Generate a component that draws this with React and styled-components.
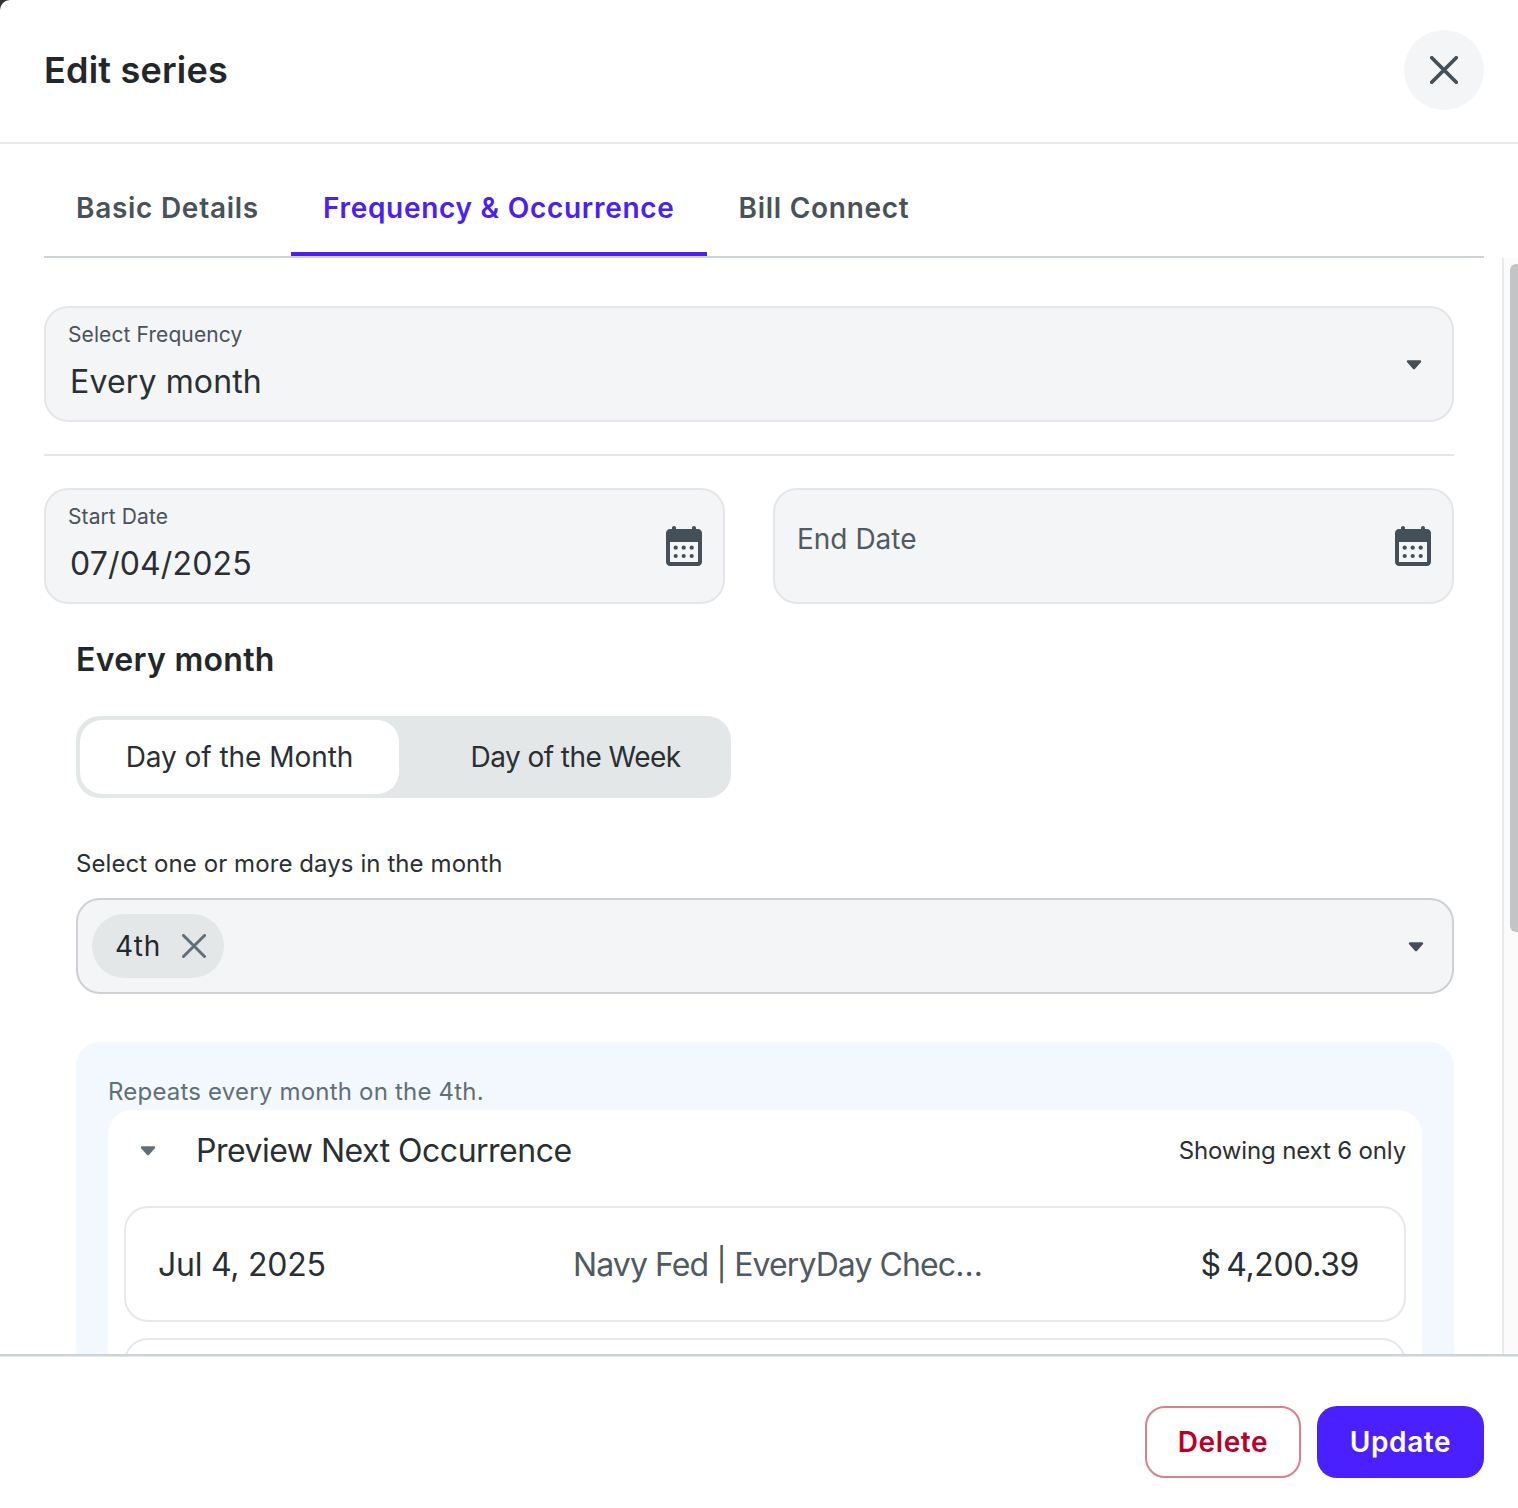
import React from "react";
import styled, { createGlobalStyle } from "styled-components";

const GlobalStyle = createGlobalStyle`
  html, body {
    margin: 0;
    height: 100%;
    background: #2f3338;
  }
  * {
    box-sizing: border-box;
  }
  body {
    font-family: "Inter", "Liberation Sans", sans-serif;
    color: #22272c;
  }
`;

const Modal = styled.div`
  height: 100vh;
  display: flex;
  flex-direction: column;
  overflow: hidden;
  background: #fff;
  border-top-left-radius: 10px;
`;
const Header = styled.header`
  flex: none;
  height: 144px;
  padding: 0 34px 2px 44px;
  display: flex;
  align-items: center;
  justify-content: space-between;
  border-bottom: 2px solid #e6e8ec;
`;
const Title = styled.h1`
  margin: 0;
  font-size: 36px;
  font-weight: 600;
  letter-spacing: 0.2px;
`;
const CloseButton = styled.button`
  width: 80px;
  height: 80px;
  padding: 0;
  border: none;
  border-radius: 50%;
  background: #f3f5f7;
  display: flex;
  align-items: center;
  justify-content: center;
`;
const Tabs = styled.nav`
  flex: none;
  height: 114px;
  margin: 0 34px 0 44px;
  display: flex;
  border-bottom: 2px solid #cdd3d7;
`;
const Tab = styled.div`
  height: 112px;
  padding: 20px 32px 0;
  display: flex;
  align-items: center;
  font-size: 28px;
  font-weight: 600;
  letter-spacing: 0.72px;
  color: ${(props) => (props.$active ? "#4a20f5" : "#4a5259")};
  border-bottom: 4px solid ${(props) => (props.$active ? "#4a20f5" : "transparent")};
`;
const Middle = styled.div`
  flex: 1;
  min-height: 0;
  display: flex;
`;
const Content = styled.main`
  flex: 1;
  min-width: 0;
  overflow: hidden;
  padding: 48px 48px 0 44px;
`;
const Rail = styled.div`
  flex: none;
  width: 16px;
  padding: 6px 0 0 6px;
  border-left: 2px solid #e8eaec;
  background: #fbfbfb;
`;
const Thumb = styled.div`
  width: 8px;
  height: 668px;
  border-radius: 6px 0 0 6px;
  background: #c2c4c6;
`;
const Field = styled.div`
  height: 116px;
  padding: 0 ${(props) => (props.$select ? "30px" : "21px")} 0 22px;
  display: flex;
  align-items: center;
  justify-content: space-between;
  background: #f3f5f7;
  border: 2px solid #e4e6e9;
  border-radius: 24px;
`;
const FieldText = styled.div`
  display: flex;
  flex-direction: column;
  gap: ${(props) => (props.$placeholder ? 0 : "15px")};
  margin-bottom: ${(props) => (props.$placeholder ? "14px" : "6px")};
`;
const FieldLabel = styled.span`
  font-size: 21px;
  line-height: 26px;
  letter-spacing: 0.1px;
  color: #4a5259;
`;
const FieldValue = styled.span`
  padding-left: 2px;
  font-size: 32px;
  line-height: 38px;
  letter-spacing: 0.15px;
  color: #2a2f34;
`;
const Placeholder = styled.span`
  font-size: 28px;
  line-height: 34px;
  color: #4f5a62;
`;
const Divider = styled.hr`
  margin: 32px 0;
  border: none;
  border-top: 2px solid #e4e6e9;
`;
const DateRow = styled.div`
  display: grid;
  grid-template-columns: 1fr 1fr;
  gap: 48px;
`;
const Section = styled.section`
  padding-left: 32px;
`;
const SectionTitle = styled.h2`
  margin: 37px 0 37px;
  font-size: 32px;
  line-height: 38px;
  font-weight: 600;
  letter-spacing: 0.3px;
`;
const Segments = styled.div`
  width: 655px;
  height: 82px;
  padding: 4px;
  display: grid;
  grid-template-columns: 319px 1fr;
  background: #e4e7e8;
  border-radius: 24px;
`;
const Segment = styled.div`
  display: flex;
  align-items: center;
  justify-content: center;
  padding-left: ${(props) => (props.$active ? "0" : "25px")};
  font-size: 28px;
  letter-spacing: ${(props) => (props.$active ? "-0.05px" : "-0.55px")};
  color: #2a2f34;
  background: ${(props) => (props.$active ? "#fff" : "transparent")};
  border-radius: 22px;
`;
const DaysLabel = styled.div`
  margin: 51px 0 20px;
  font-size: 24px;
  line-height: 29px;
  letter-spacing: 0.08px;
  color: #2a2f34;
`;
const MultiSelect = styled.div`
  height: 96px;
  padding: 0 28px 0 14px;
  display: flex;
  align-items: center;
  justify-content: space-between;
  background: #f3f5f7;
  border: 2px solid #cdd1d5;
  border-radius: 24px;
`;
const Chip = styled.div`
  width: 132px;
  height: 64px;
  padding-left: 23px;
  display: flex;
  align-items: center;
  gap: 21px;
  font-size: 28px;
  letter-spacing: 0.7px;
  background: #e4e7e8;
  border-radius: 32px;
`;
const PreviewPanel = styled.div`
  margin-top: 48px;
  padding: 35px 32px 0;
  background: #f3f7fe;
  border-radius: 24px 24px 0 0;
`;
const RepeatText = styled.div`
  font-size: 24px;
  line-height: 29px;
  letter-spacing: 0.2px;
  color: #5f6f78;
`;
const PreviewCard = styled.div`
  margin-top: 4px;
  padding: 0 16px 16px;
  background: #fff;
  border-radius: 24px 24px 0 0;
`;
const PreviewHeader = styled.div`
  height: 96px;
  padding-left: 16px;
  padding-bottom: 16px;
  display: flex;
  align-items: center;
`;
const PreviewTitle = styled.div`
  margin-left: 40px;
  flex: 1;
  font-size: 32px;
  letter-spacing: -0.5px;
  color: #2a2f34;
`;
const ShowingText = styled.div`
  font-size: 24px;
  letter-spacing: -0.15px;
  color: #2a2f34;
`;
const OccurrenceRow = styled.div`
  height: 116px;
  margin-bottom: 16px;
  padding: 0 45px 0 32px;
  display: grid;
  grid-template-columns: 415px 1fr auto;
  align-items: center;
  font-size: 32px;
  letter-spacing: -0.25px;
  color: #2a2f34;
  border: 2px solid #e6e8ea;
  border-radius: 24px;
`;
const Account = styled.span`
  letter-spacing: -0.9px;
  color: #4f5a62;
`;
const Amount = styled.span`
  letter-spacing: -0.4px;
  word-spacing: -3px;
`;
const Footer = styled.footer`
  flex: none;
  height: 154px;
  padding: 50px 34px 0 0;
  display: flex;
  justify-content: flex-end;
  align-items: flex-start;
  gap: 16px;
  background: #fff;
  border-top: 2px solid #cdd4d7;
  box-shadow: inset 0 1px 0 #e6e9eb;
`;
const Button = styled.button`
  height: 72px;
  width: ${(props) => (props.$danger ? "156px" : "167px")};
  font-family: inherit;
  font-size: 28px;
  font-weight: 600;
  letter-spacing: 0.6px;
  color: ${(props) => (props.$danger ? "#b90028" : "#fff")};
  background: ${(props) => (props.$danger ? "#fff" : "#4a20ff")};
  border: ${(props) => (props.$danger ? "2px solid #d97f90" : "none")};
  border-radius: 20px;
`;

const Caret = ({ color = "#454f57" }) => (
  <svg width="16" height="12" viewBox="0 -2 16 12">
    <path
      d="M2 1.500h12L8 8.200z"
      fill={color}
      stroke={color}
      strokeWidth="2.400"
      strokeLinejoin="round"
    />
  </svg>
);

const CalendarIcon = () => (
  <svg width="36" height="40" viewBox="0 0 36 40">
    <path
      d="M8 0c1.100 0 2 .9 2 2v1h16V2c0-1.100.9-2 2-2s2 .9 2 2v1h2c2.200 0 4 1.800 4 4v29c0 2.200-1.800 4-4 4H4c-2.200 0-4-1.800-4-4V7c0-2.200 1.800-4 4-4h2V2c0-1.100.9-2 2-2z"
      fill="#454f57"
    />
    <rect x="4" y="16" width="28" height="20" fill="#f3f5f7" />
    {[9.700, 17.700, 25.700].map((cx) =>
      [21.700, 30].map((cy) => (
        <circle key={`${cx}-${cy}`} cx={cx} cy={cy} r="2.100" fill="#454f57" />
      ))
    )}
  </svg>
);

const Cross = ({ size, color, width }) => (
  <svg width={size} height={size} viewBox="0 0 24 24">
    <path
      d="M1.500 1.500l21 21M22.500 1.500l-21 21"
      stroke={color}
      strokeWidth={width}
      strokeLinecap="round"
      fill="none"
    />
  </svg>
);

const App = () => {
  return (
    <Modal>
      <GlobalStyle />
      <Header>
        <Title>Edit series</Title>
        <CloseButton>
          <Cross size={28} color="#454f57" width={3.200} />
        </CloseButton>
      </Header>
      <Tabs>
        <Tab>Basic Details</Tab>
        <Tab $active>Frequency &amp; Occurrence</Tab>
        <Tab>Bill Connect</Tab>
      </Tabs>
      <Middle>
        <Content>
          <Field $select>
            <FieldText>
              <FieldLabel>Select Frequency</FieldLabel>
              <FieldValue>Every month</FieldValue>
            </FieldText>
            <Caret />
          </Field>
          <Divider />
          <DateRow>
            <Field>
              <FieldText>
                <FieldLabel>Start Date</FieldLabel>
                <FieldValue>07/04/2025</FieldValue>
              </FieldText>
              <CalendarIcon />
            </Field>
            <Field>
              <FieldText $placeholder>
                <Placeholder>End Date</Placeholder>
              </FieldText>
              <CalendarIcon />
            </Field>
          </DateRow>
          <Section>
            <SectionTitle>Every month</SectionTitle>
            <Segments>
              <Segment $active>Day of the Month</Segment>
              <Segment>Day of the Week</Segment>
            </Segments>
            <DaysLabel>Select one or more days in the month</DaysLabel>
            <MultiSelect>
              <Chip>
                4th
                <Cross size={24} color="#5f6f78" width={3} />
              </Chip>
              <Caret />
            </MultiSelect>
            <PreviewPanel>
              <RepeatText>Repeats every month on the 4th.</RepeatText>
              <PreviewCard>
                <PreviewHeader>
                  <Caret color="#5f6f78" />
                  <PreviewTitle>Preview Next Occurrence</PreviewTitle>
                  <ShowingText>Showing next 6 only</ShowingText>
                </PreviewHeader>
                <OccurrenceRow>
                  <span>Jul 4, 2025</span>
                  <Account>Navy Fed | EveryDay Chec…</Account>
                  <Amount>$ 4,200.39</Amount>
                </OccurrenceRow>
                <OccurrenceRow />
              </PreviewCard>
            </PreviewPanel>
          </Section>
        </Content>
        <Rail>
          <Thumb />
        </Rail>
      </Middle>
      <Footer>
        <Button $danger>Delete</Button>
        <Button>Update</Button>
      </Footer>
    </Modal>
  );
};

export default App;
